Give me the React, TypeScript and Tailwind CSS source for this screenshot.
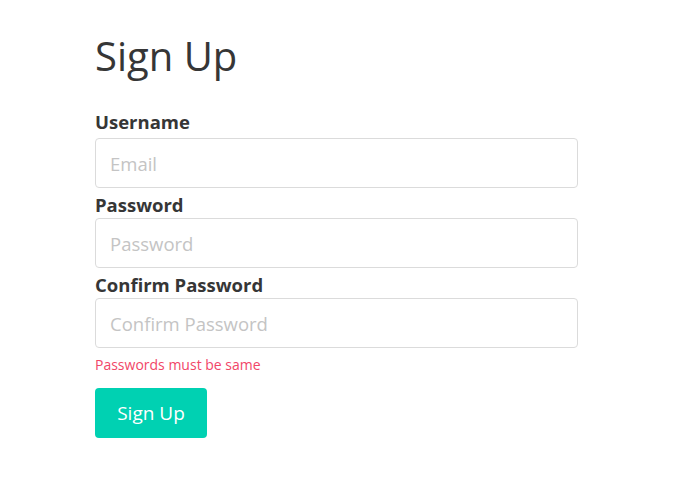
import { useState } from "react";

const SignUp: React.FC = () => {
  const [username, setUsername] = useState("");
  const [password, setPassword] = useState("");
  const [confirm, setConfirm] = useState("");

  const inputClass =
    "block w-full h-[50px] rounded-[4px] border border-[#dbdbdb] bg-white px-[14px] text-[18.5px] text-[#363636] placeholder:text-[#c4c4c4] outline-none focus:border-[#00d1b2]";

  return (
    <div className="min-h-screen bg-white font-['Open_Sans',sans-serif] text-[#363636]">
      <div className="ml-[95px] w-[483px] pt-[32px]">
        <h1 className="text-[40px] leading-[48px] font-normal mb-[29px]">Sign Up</h1>
        <form onSubmit={(e) => e.preventDefault()}>
          <label className="block text-[18.5px] font-bold leading-[26px] mb-[3px]">Username</label>
          <input
            type="text"
            placeholder="Email"
            value={username}
            onChange={(e) => setUsername(e.target.value)}
            className={inputClass}
          />
          <label className="block text-[18.5px] font-bold leading-[26px] mt-[4px]">Password</label>
          <input
            type="password"
            placeholder="Password"
            value={password}
            onChange={(e) => setPassword(e.target.value)}
            className={inputClass}
          />
          <label className="block text-[18.5px] font-bold leading-[26px] mt-[4px]">Confirm Password</label>
          <input
            type="password"
            placeholder="Confirm Password"
            value={confirm}
            onChange={(e) => setConfirm(e.target.value)}
            className={inputClass}
          />
          <p className="mt-[7px] text-[14px] leading-[20px] text-[#f14668]">Passwords must be same</p>
          <button
            type="submit"
            className="mt-[13px] h-[50px] w-[112px] rounded-[4px] bg-[#00d1b2] text-[19px] text-white"
          >
            Sign Up
          </button>
        </form>
      </div>
    </div>
  );
};

export default function App() {
  return <SignUp />;
}
